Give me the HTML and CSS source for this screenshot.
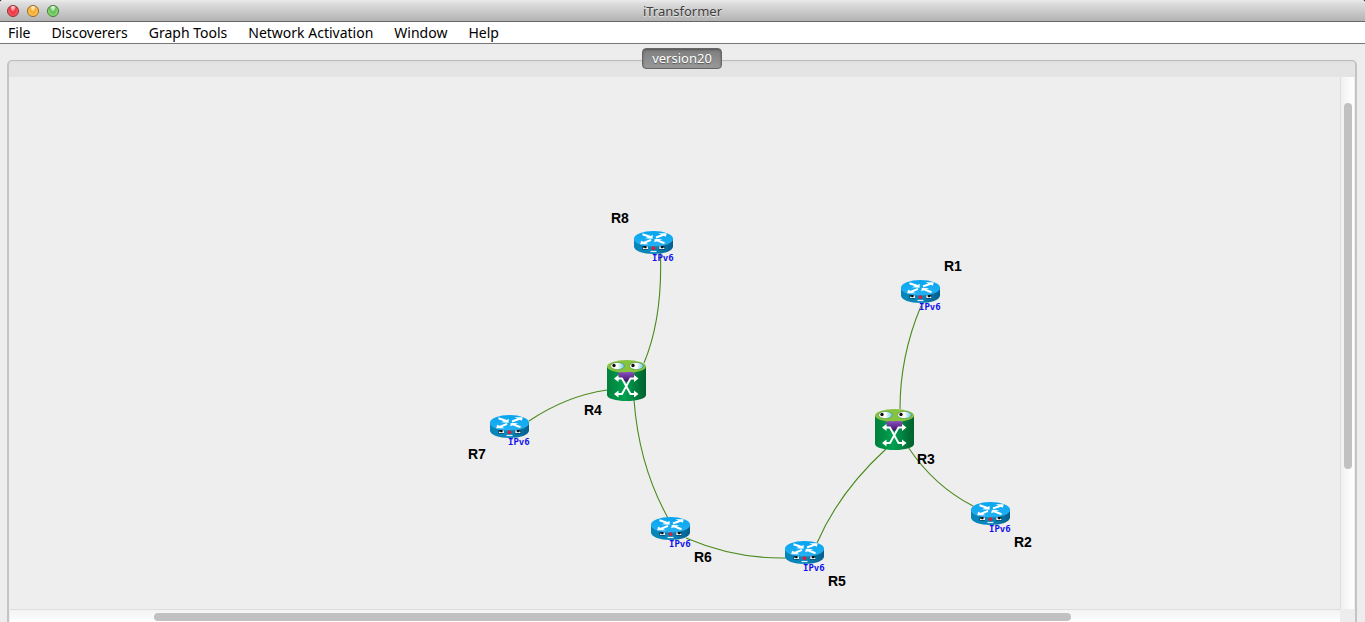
FILE: index.html
```html
<!DOCTYPE html>
<html lang="en">
<head>
<meta charset="utf-8">
<title>iTransformer</title>
<link rel="stylesheet" href="styles.css">
</head>
<body>
<div class="window">
  <header class="titlebar">
    <div class="lights">
      <button class="light light-red" aria-label="Close"></button>
      <button class="light light-amber" aria-label="Minimize"></button>
      <button class="light light-green" aria-label="Zoom"></button>
    </div>
    <h1 class="title">iTransformer</h1>
  </header>
  <nav class="menubar">
    <button class="menu">File</button>
    <button class="menu">Discoverers</button>
    <button class="menu">Graph Tools</button>
    <button class="menu">Network Activation</button>
    <button class="menu">Window</button>
    <button class="menu">Help</button>
  </nav>
  <main class="workspace">
    <button class="tab">version20</button>
    <section class="panel">
      <div class="viewport">
        <svg class="graph" role="img" aria-label="Network topology">
          <defs>
            <linearGradient id="blueSide"><stop offset="0" stop-color="#0585b8"/><stop offset=".5" stop-color="#0b86ba"/><stop offset="1" stop-color="#055f8c"/></linearGradient>
            <linearGradient id="blueTop" x2="0" y2="1"><stop offset="0" stop-color="#08a4ee"/><stop offset="1" stop-color="#20b2f5"/></linearGradient>
            <linearGradient id="greenSide"><stop offset="0" stop-color="#00803c"/><stop offset=".45" stop-color="#00a050"/><stop offset="1" stop-color="#00602c"/></linearGradient>
            <linearGradient id="mouth" x2="0" y2="1"><stop offset="0" stop-color="#8b4fc0"/><stop offset="1" stop-color="#3b1264"/></linearGradient>
            <linearGradient id="eye"><stop offset=".5" stop-color="#fff"/><stop offset="1" stop-color="#63c5de"/></linearGradient>
            <g id="router">
              <path d="M0 7.500V15.500C0 20 9 23 19.500 23S39 20 39 15.500V7.500Z" fill="url(#blueSide)"/>
              <ellipse cx="19.500" cy="7.500" rx="19.500" ry="7.500" fill="url(#blueTop)"/>
              <path d="M.3 8.500C2 13 10 15 19.500 15S37 13 38.700 8.500" fill="none" stroke="#35b6f2" stroke-width=".7"/>
              <g fill="none" stroke="#fff" stroke-width="2">
                <path d="M8.500 3.300 16 5.800M30.500 12.200 23 9.200M22 6.500 29.500 3.700M17 8.800 9.500 12"/>
              </g>
              <g fill="#fff">
                <path d="M18.800 4 18.500 7.800 11 7.300Z"/>
                <path d="M20.200 11.300 20.800 8 28.300 8.200Z"/>
                <path d="M24.500 2.300 32.800 2.300 31.800 5.800Z"/>
                <path d="M14.500 13.300 6.200 13.300 7.200 9.800Z"/>
              </g>
              <path d="M8.500 15h5.500v3.500H8.500zM25 15h5.500v3.500H25z" fill="#05354f"/>
              <path d="M9 16.800h5V18H9zM12.500 15.300h1.300v2h-1.300zM25.300 16.800h5V18h-5zM25.300 15.300h1.300v2h-1.300z" fill="#fff"/>
              <path d="M10.500 15.300h1.800v2h-1.800zM27.200 15.300h1.800v2h-1.800z" fill="#000"/>
              <circle cx="19.500" cy="17.200" r="1.900" fill="#d3213c"/>
              <path d="M16.500 20.500h6" stroke="#dff4ff" stroke-width="1.200"/>
            </g>
            <g id="switch">
              <path d="M0 6V35C0 38.500 9 41 19.500 41S39 38.500 39 35V6Z" fill="url(#greenSide)"/>
              <ellipse cx="19.500" cy="6.500" rx="19.500" ry="6.500" fill="#86c440"/>
              <ellipse cx="10.500" cy="6" rx="7" ry="3.500" fill="url(#eye)" stroke="#397c35" stroke-width=".5"/>
              <ellipse cx="29.500" cy="6" rx="7" ry="3.500" fill="url(#eye)" stroke="#397c35" stroke-width=".5"/>
              <circle cx="7" cy="5.500" r="1.700" fill="#111"/>
              <circle cx="26" cy="5.500" r="1.700" fill="#111"/>
              <path d="M10.500 13.500C13 11.500 17 12.500 19 12.300S25 11.500 28 13.500C26 19 23 21 19.500 22 15 20 13 18 10.500 13.500Z" fill="url(#mouth)"/>
              <path d="M10 18.500H15L23.500 34H29M10 34H15L23.500 18.500H29" fill="none" stroke="#fff" stroke-width="1.900"/>
              <path d="M7 18.500 11.500 15V22ZM31.500 18.500 27 15V22ZM7 34 11.500 30.500V37.500ZM31.500 34 27 30.500V37.500Z" fill="#fff"/>
            </g>
          </defs>
          <g transform="translate(-10 -77)">
            <g class="edges">
              <path d="M660 244Q664 315 644 363"/>
              <path d="M529 421Q566 396 607 390"/>
              <path d="M634 400Q639 466 668 518"/>
              <path d="M686 538Q735 559 786 558"/>
              <path d="M817 543Q839 492 886 449"/>
              <path d="M908 447Q934 486 973 506"/>
              <path d="M921 306Q900 356 900 409"/>
            </g>
            <g class="icons">
              <use href="#router" x="634" y="231"/>
              <use href="#router" x="901" y="280"/>
              <use href="#router" x="490" y="415"/>
              <use href="#router" x="651" y="517"/>
              <use href="#router" x="785" y="541"/>
              <use href="#router" x="971" y="502"/>
              <use href="#switch" x="607" y="360"/>
              <use href="#switch" x="875" y="409"/>
            </g>
            <g class="protocols">
              <text x="652" y="261">IPv6</text>
              <text x="919" y="310">IPv6</text>
              <text x="508" y="445">IPv6</text>
              <text x="669" y="547">IPv6</text>
              <text x="803" y="571">IPv6</text>
              <text x="989" y="532">IPv6</text>
            </g>
            <g class="names">
              <text x="611" y="223">R8</text>
              <text x="944" y="271">R1</text>
              <text x="468" y="459">R7</text>
              <text x="584" y="415">R4</text>
              <text x="694" y="562">R6</text>
              <text x="828" y="586">R5</text>
              <text x="1014" y="547">R2</text>
              <text x="917" y="464">R3</text>
            </g>
          </g>
        </svg>
      </div>
      <div class="track track-y"><div class="thumb"></div></div>
      <div class="track track-x"><div class="thumb"></div></div>
    </section>
  </main>
</div>
</body>
</html>
```
FILE: styles.css
```css
* { box-sizing: border-box; }
body {
  margin: 0;
  background: #111;
  font-family: "Noto Sans", "Open Sans", sans-serif;
}
button {
  margin: 0;
  padding: 0;
  border: 0;
  background: none;
  font: inherit;
  color: inherit;
}
.window {
  display: flex;
  flex-direction: column;
  height: 100vh;
  overflow: hidden;
  border-radius: 3px 3px 0 0;
  background: #ededed;
}
.titlebar {
  display: grid;
  grid-template-columns: 1fr auto 1fr;
  align-items: center;
  height: 22px;
  padding: 0 7px;
  border-bottom: 1px solid #666;
  background: linear-gradient(#ececec, #dedede 3px, #b3b3b3);
}
.lights { display: flex; gap: 8px; }
.light {
  width: 12px;
  height: 12px;
  border: 1px solid;
  border-radius: 50%;
}
.light-red {
  border-color: #932d31;
  background: radial-gradient(ellipse at 50% 0, #fff, #f9b0b4 20%, #ee3440 45%, #ff7a7e);
}
.light-amber {
  border-color: #9b6422;
  background: radial-gradient(ellipse at 50% 0, #fff, #fde0a8 20%, #f5a92d 45%, #ffe274);
}
.light-green {
  border-color: #3d7a33;
  background: radial-gradient(ellipse at 50% 0, #fff, #cdeec4 20%, #62bf56 45%, #b2f596);
}
.title {
  margin: 0;
  font-size: 13px;
  line-height: 20px;
  font-weight: 400;
  color: #3f3f3f;
  text-shadow: 0 1px 0 #e6e6e6;
}
.menubar {
  display: flex;
  gap: 21px;
  height: 22px;
  padding: 0 8px;
  border-bottom: 1px solid #777;
  background: #fff;
  font-size: 14px;
  line-height: 21px;
  color: #000;
}
.workspace {
  display: flex;
  flex: 1;
  flex-direction: column;
  min-height: 0;
  padding: 4px 8px 0 7px;
}
.tab {
  z-index: 1;
  align-self: center;
  height: 21px;
  margin-bottom: -9px;
  padding: 0 9px;
  border: 1px solid #666;
  border-radius: 4px;
  background: linear-gradient(#7d7d7d, #999);
  box-shadow: inset 0 1px 2px #555;
  font-size: 13px;
  line-height: 19px;
  color: #fff;
  text-shadow: 0 1px 1px #555;
}
.panel {
  display: grid;
  flex: 1;
  grid-template-columns: 1fr 14px;
  grid-template-rows: 1fr 13px;
  min-height: 0;
  padding: 16px 1px 0;
  border: 2px solid #c4c4c4;
  border-top-color: #bcbcbc;
  border-width: 1px 2px 0;
  border-radius: 5px 5px 0 0;
  background: linear-gradient(#dedede, #e4e4e4 3px, #e4e4e4 16px, #ededed 16px);
}
.viewport { overflow: hidden; background: #eee; }
.graph { display: block; width: 100%; height: 100%; }
.edges { fill: none; stroke: #4a8a1c; stroke-width: 1.1; }
.protocols {
  fill: #1010f0;
  font: bold 9px "DejaVu Sans Mono", monospace;
}
.names {
  fill: #000;
  font: bold 14px "Liberation Sans", Arial, sans-serif;
}
.track { display: grid; }
.track-y {
  grid-template-rows: 26fr 366fr 140fr;
  padding: 0 2px 0 3px;
  border-left: 1px solid #dedede;
  background: linear-gradient(90deg, #f1f1f1, #fff);
}
.track-y .thumb { grid-row: 2; }
.track-x {
  grid-template-columns: 144fr 917fr 269fr;
  padding: 3px 0 1px;
  border-top: 1px solid #dedede;
  background: linear-gradient(#f3f3f3, #fff);
}
.track-x .thumb { grid-column: 2; }
.thumb { border-radius: 4px; background: #c1c1c1; }
```
